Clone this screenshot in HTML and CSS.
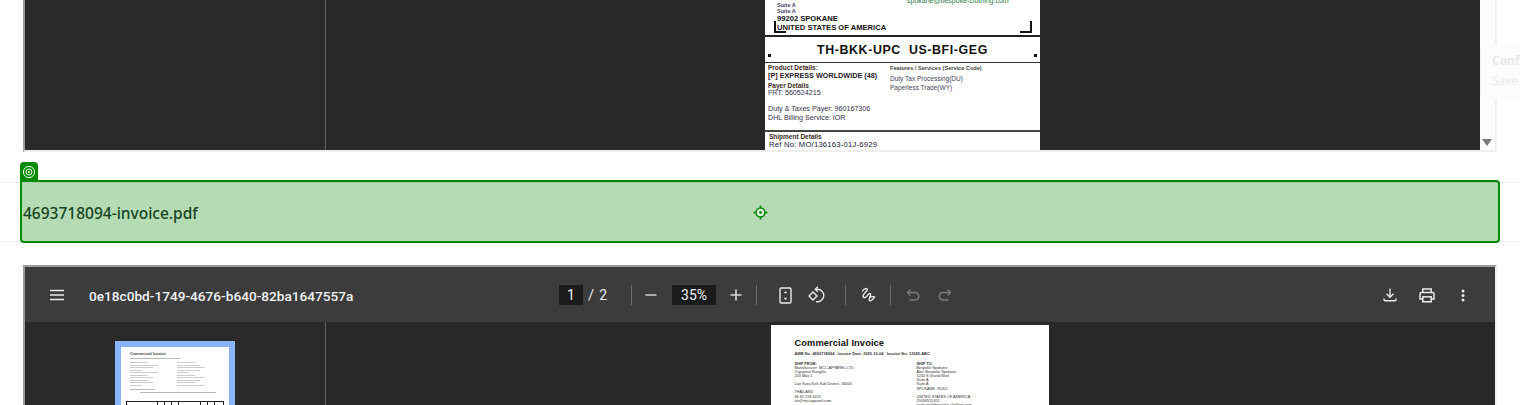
FILE: index.html
```html
<!DOCTYPE html>
<html lang="en">
<head>
    <meta charset="UTF-8">
    <title>Shipment documents</title>
    <link rel="stylesheet" href="styles.css">
</head>
<body>
    <div class="viewer viewer-top">
        <div class="side"></div>
        <div class="stage">
            <div class="label-page">
                <div class="addr">
                    <div class="addr-left">
                        <div class="tiny">Suite A</div>
                        <div class="tiny">Suite A</div>
                        <div class="addr-bold">99202 SPOKANE</div>
                        <div class="addr-bold addr-country">UNITED STATES OF AMERICA</div>
                    </div>
                    <div class="addr-right">spokane@bespoke-clothing.com</div>
                    <span class="corner corner-left"></span>
                    <span class="corner corner-right"></span>
                </div>
                <div class="routing">
                    <span class="dot"></span>
                    <span class="routing-code">TH-BKK-UPC&nbsp; US-BFI-GEG</span>
                    <span class="dot"></span>
                </div>
                <div class="details">
                    <div class="details-left">
                        <div class="d-head">Product Details:</div>
                        <div class="d-product">[P] EXPRESS WORLDWIDE (48)</div>
                        <div class="d-head d-payer">Payer Details</div>
                        <div class="d-text">FRT: 560524215</div>
                        <div class="d-text d-duty">Duty &amp; Taxes Payer: 960167306</div>
                        <div class="d-text d-bill">DHL Billing Service: IOR</div>
                    </div>
                    <div class="details-right">
                        <div class="f-head">Features / Services (Service Code)</div>
                        <div class="f-text f-first">Duty Tax Processing(DU)</div>
                        <div class="f-text">Paperless Trade(WY)</div>
                    </div>
                </div>
                <div class="shipment">
                    <div class="d-head">Shipment Details</div>
                    <div class="s-ref">Ref No: MO/136163-01J-6929</div>
                </div>
            </div>
        </div>
        <div class="scrollbar"><span class="scroll-down"></span></div>
    </div>

    <div class="toast">
        <div class="toast-title">Confirm</div>
        <div class="toast-text">Save</div>
    </div>

    <div class="doc-row">
        <span class="doc-name">4693718094-invoice.pdf</span>
        <div class="selection">
            <div class="selection-tab">
                <svg width="14" height="14" viewBox="0 0 14 14" fill="none" stroke="#fff">
                    <circle cx="7" cy="7" r="5.6" stroke-width="1"/>
                    <circle cx="7" cy="7" r="3" stroke-width="1"/>
                    <circle cx="7" cy="7" r="1" fill="#fff" stroke="none"/>
                </svg>
            </div>
            <svg class="selection-aim" width="15" height="15" viewBox="0 0 15 15" fill="none" stroke="#0a8a0a">
                <circle cx="7.5" cy="7.5" r="4.5" stroke-width="1.6" fill="#dff0df"/>
                <circle cx="7.5" cy="7.5" r="1.4" fill="#0a8a0a" stroke="none"/>
                <path d="M7.5 0.5v2.5M7.5 12v2.5M0.5 7.5h2.5M12 7.5h2.5" stroke-width="1.6"/>
            </svg>
        </div>
    </div>

    <div class="viewer viewer-bottom">
        <div class="toolbar">
            <div class="tb-left">
                <svg class="ic" width="16" height="12" viewBox="0 0 16 12" stroke="#e8eaed" stroke-width="1.5">
                    <path d="M1 1.5h14M1 6h14M1 10.5h14"/>
                </svg>
                <span class="file-title">0e18c0bd-1749-4676-b640-82ba1647557a</span>
            </div>
            <div class="tb-center">
                <span class="num-box page-box">1</span>
                <span class="tb-slash">/</span>
                <span class="tb-total">2</span>
                <span class="sep sep-a"></span>
                <svg class="ic ic-minus" width="12" height="12" viewBox="0 0 12 12" stroke="#c4c7ca" stroke-width="1.6"><path d="M0.5 6h11"/></svg>
                <span class="num-box zoom-box">35%</span>
                <svg class="ic ic-plus" width="12" height="12" viewBox="0 0 12 12" stroke="#d5d7d9" stroke-width="1.6"><path d="M0.5 6h11M6 0.5v11"/></svg>
                <span class="sep sep-b"></span>
                <svg class="ic ic-fit" width="13" height="17" viewBox="0 0 13 17" fill="none" stroke="#e8eaed">
                    <rect x="1" y="1" width="11" height="15" rx="1.2" stroke-width="1.4"/>
                    <path d="M6.5 4l-1.8 2.2h3.6zM6.5 13l-1.8-2.2h3.6z" fill="#e8eaed" stroke="none"/>
                </svg>
                <svg class="ic ic-rotate" width="18" height="18" viewBox="0 0 18 18" fill="none" stroke="#e8eaed" stroke-width="1.4">
                    <path d="M7.8 3.3h1.7a6.2 6.2 0 1 1 -1.5 12.2"/>
                    <path d="M9.8 0.8L7.3 3.3l2.5 2.5"/>
                    <path d="M1 10L5 6l4 4-4 4z"/>
                </svg>
                <span class="sep sep-c"></span>
                <svg class="ic ic-draw" width="16" height="16" viewBox="0 0 16 16" fill="none" stroke="#e8eaed" stroke-width="1.4" stroke-linecap="round">
                    <path d="M2.5 4C4 1.5 7 0.8 7.3 2.5 7.6 4.5 2.5 6.5 3.2 9.5c.5 2.2 3.2 1 4.6-1.5C9 6 11 5.8 10.5 8.5c-.4 2.2-2.3 4.3-1 5.2 1.2.8 3.3-1.2 5-3.5"/>
                    <path d="M10 10c1.5-.6 3-.5 4.5 0"/>
                </svg>
                <span class="sep sep-d"></span>
                <svg class="ic ic-undo" width="14" height="14" viewBox="0 0 14 14" fill="none" stroke="#7c7e80" stroke-width="1.4">
                    <path d="M4.5 1.5L1.5 4.5l3 3"/>
                    <path d="M1.5 4.5h7.500a3.600 3.600 0 0 1 0 7.500H3.500"/>
                </svg>
                <svg class="ic ic-redo" width="14" height="14" viewBox="0 0 14 14" fill="none" stroke="#7c7e80" stroke-width="1.4">
                    <path d="M9.5 1.5l3 3-3 3"/>
                    <path d="M12.5 4.5H5a3.600 3.600 0 0 0 0 7.500h5.500"/>
                </svg>
            </div>
            <div class="tb-right">
                <svg class="ic ic-save" width="14" height="14" viewBox="0 0 14 14" fill="none" stroke="#e8eaed" stroke-width="1.4">
                    <path d="M7 0.5v8.5M3.5 5.8L7 9.300l3.500-3.500"/>
                    <path d="M1 10.5v1c0 .8.5 1.3 1.3 1.3h9.400c.8 0 1.300-.5 1.300-1.300v-1"/>
                </svg>
                <svg class="ic ic-print" width="16" height="15" viewBox="0 0 16 15" fill="none" stroke="#e8eaed" stroke-width="1.5">
                    <path d="M3.8 4.5V1h8.400v3.500"/>
                    <path d="M3.8 11H1V6c0-.9.6-1.5 1.5-1.5h11c.9 0 1.500.6 1.500 1.500v5h-2.800"/>
                    <rect x="3.8" y="8.8" width="8.4" height="5"/>
                </svg>
                <svg class="ic ic-more" width="4" height="13" viewBox="0 0 4 13" fill="#e8eaed">
                    <circle cx="2" cy="2" r="1.5"/><circle cx="2" cy="6.5" r="1.5"/><circle cx="2" cy="11" r="1.5"/>
                </svg>
            </div>
        </div>
        <div class="viewer-body">
            <div class="side side-thumbs">
                <div class="thumb">
                    <div class="thumb-title">Commercial Invoice</div>
                    <div class="thumb-line thumb-line-awb"></div>
                    <div class="thumb-cols">
                        <div class="thumb-col">
                            <i class="w-s"></i><i></i><i class="w-m"></i><i class="w-xs"></i><i class="gap"></i><i class="gap w-s"></i><i class="w-m"></i><i class="w-s"></i><i class="w-m"></i><i class="w-xs"></i>
                        </div>
                        <div class="thumb-col">
                            <i class="w-s"></i><i class="w-m"></i><i></i><i class="w-m"></i><i class="w-xs"></i><i class="w-s"></i><i class="gap"></i><i class="w-m"></i><i class="w-s"></i><i></i>
                        </div>
                    </div>
                    <div class="thumb-line thumb-line-short"></div>
                    <div class="thumb-line thumb-line-long"></div>
                    <div class="thumb-table">
                        <span class="cell-first"></span><span></span><span></span><span></span><span class="cell-wide"></span><span></span><span></span><span></span>
                    </div>
                </div>
            </div>
            <div class="stage stage-bottom">
                <div class="invoice-page">
                    <div class="inv-title">Commercial Invoice</div>
                    <div class="inv-meta">AWB No: 4693718094 &nbsp; Invoice Date: 2025-10-04 &nbsp; Invoice No: 12345-ABC</div>
                    <div class="inv-cols">
                        <div class="inv-col">
                            <div class="inv-head">SHIP FROM:</div>
                            <div>Manufacturer: MCC APPAREL LTD.</div>
                            <div>Yupaporn Rangkla</div>
                            <div>243 Moo 1</div>
                            <div class="inv-gap">Lao Suea Kok Sub-District, 34000</div>
                            <div class="inv-gap">THAILAND</div>
                            <div>66 82 193 6415</div>
                            <div>tos@mccapparel.com</div>
                        </div>
                        <div class="inv-col">
                            <div class="inv-head">SHIP TO:</div>
                            <div>Bespoke Spokane</div>
                            <div>Attn: Bespoke Spokane</div>
                            <div>1200 S Grand Blvd</div>
                            <div>Suite A</div>
                            <div>Suite A</div>
                            <div>SPOKANE, 99202</div>
                            <div class="inv-gap">UNITED STATES OF AMERICA</div>
                            <div>15096555451</div>
                            <div>spokane@bespoke-clothing.com</div>
                        </div>
                    </div>
                </div>
            </div>
        </div>
    </div>
</body>
</html>
```

FILE: styles.css
```css
html, body {
    margin: 0;
    height: 405px;
    overflow: hidden;
    background-color: white;
}
body {
    position: relative;
    font-family: "Liberation Sans", Arial, sans-serif;
}

/* pdf viewers */
.viewer {
    width: 1470px;
    margin-left: 23px;
    border-style: solid;
    border-width: 2px;
    border-color: #9b9b9b #eeeeee #eeeeee #9b9b9b;
    background-color: #282828;
}
.viewer-top {
    display: flex;
    height: 150px;
    border-top: 0;
}
.viewer-bottom {
    margin-top: 23px;
    height: 138px;
    border-bottom: 0;
}
.side {
    flex: none;
    width: 300px;
    background-color: #2a2a2b;
    border-right: 1px solid #5f5f5f;
}
.stage {
    flex: 1;
    display: flex;
    justify-content: center;
    align-items: flex-end;
    background-color: #282828;
    overflow: hidden;
}
.scrollbar {
    flex: none;
    width: 15px;
    position: relative;
    background-color: #fcfcfc;
}
.scroll-down {
    position: absolute;
    left: 2px;
    bottom: 4px;
    border-left: 5px solid transparent;
    border-right: 5px solid transparent;
    border-top: 7px solid #7b7b7b;
}

/* shipping label */
.label-page {
    flex: none;
    width: 275px;
    height: 150px;
    margin-left: -1px;
    display: flex;
    flex-direction: column;
    justify-content: flex-end;
    overflow: hidden;
    background-color: white;
    color: #1a1a2a;
}
.addr {
    flex: none;
    position: relative;
    height: 40px;
    display: flex;
    border-bottom: 2px solid #222;
    box-sizing: border-box;
}
.addr-left {
    width: 130px;
    padding: 5px 0 0 12px;
}
.addr-right {
    font-size: 7px;
    color: #2a7a4a;
    line-height: 8px;
}
.tiny {
    font-size: 5.5px;
    font-weight: bold;
    line-height: 6px;
    color: #444466;
}
.addr-bold {
    font-size: 7.6px;
    font-weight: bold;
    line-height: 9px;
    white-space: nowrap;
    color: #111;
}
.corner {
    position: absolute;
    bottom: 2px;
    width: 10px;
    height: 10px;
    border-bottom: 2px solid #111;
}
.corner-left {
    left: 9px;
    border-left: 2px solid #111;
}
.corner-right {
    right: 8px;
    border-right: 2px solid #111;
}
.routing {
    flex: none;
    height: 26px;
    display: flex;
    align-items: center;
    justify-content: space-between;
    padding: 0 3px;
    box-sizing: border-box;
    border-bottom: 1px solid #333;
}
.routing-code {
    font-size: 12.4px;
    font-weight: bold;
    letter-spacing: 0.6px;
    color: #111;
    white-space: nowrap;
}
.dot {
    width: 3px;
    height: 3px;
    margin-top: 12px;
    background-color: #111;
}
.details {
    flex: none;
    height: 69px;
    display: flex;
    box-sizing: border-box;
    padding: 1px 3px 0;
    border-bottom: 2px solid #444;
}
.details-left {
    width: 122px;
}
.details-right {
    padding-top: 1px;
}
.d-head {
    font-size: 6.5px;
    font-weight: bold;
    line-height: 7px;
    color: #3a2a1a;
}
.d-product {
    margin-top: 1px;
    font-size: 7.25px;
    font-weight: bold;
    line-height: 8px;
    white-space: nowrap;
    color: #2a1a2a;
}
.d-payer {
    margin-top: 2px;
}
.d-text {
    font-size: 7.15px;
    line-height: 8px;
    white-space: nowrap;
    color: #33334a;
}
.d-duty {
    margin-top: 8px;
}
.d-bill {
    margin-top: 1px;
}
.f-head {
    font-size: 5.6px;
    font-weight: bold;
    line-height: 7px;
    white-space: nowrap;
    color: #444;
}
.f-text {
    font-size: 6.5px;
    line-height: 9px;
    white-space: nowrap;
    color: #44445a;
}
.f-first {
    margin-top: 2px;
}
.shipment {
    flex: none;
    height: 18px;
    padding: 1px 0 0 4px;
    box-sizing: border-box;
}
.s-ref {
    font-size: 7.7px;
    line-height: 9px;
    letter-spacing: 0.2px;
    color: #22223a;
}

/* faded notification at the right edge */
.toast {
    position: absolute;
    left: 1480px;
    top: 45px;
    width: 40px;
    height: 54px;
    box-sizing: border-box;
    padding: 6px 0 0 11px;
    overflow: hidden;
    white-space: nowrap;
    background-color: #fcfcfc;
    border-left: 1px solid #f3f3f3;
    font-family: "Open Sans", sans-serif;
    font-size: 12px;
    line-height: 20px;
    color: #e8e8e8;
}
.toast-title {
    font-weight: bold;
}

/* document row */
.doc-row {
    display: flex;
    align-items: center;
    position: relative;
    height: 56px;
    margin-top: 30px;
    padding-left: 23px;
    padding-top: 2px;
    border-top: 1px solid #efefef;
    border-bottom: 1px solid #efefef;
    font-family: "Noto Sans", sans-serif;
    font-size: 15.5px;
    font-weight: 500;
    color: #24292e;
}
.selection {
    position: absolute;
    left: 20px;
    top: -3px;
    width: 1480px;
    height: 63px;
    box-sizing: border-box;
    border: 2px solid #008a00;
    border-radius: 4px;
    border-top-left-radius: 0;
    background-color: rgba(0, 130, 0, 0.29);
}
.selection-tab {
    position: absolute;
    left: -2px;
    top: -20px;
    width: 18px;
    height: 19px;
    display: flex;
    align-items: center;
    justify-content: center;
    background-color: #008a00;
    border-radius: 4px 4px 0 0;
}
.selection-aim {
    position: absolute;
    left: 731px;
    top: 23px;
}

/* toolbar */
.toolbar {
    height: 54px;
    padding-top: 1px;
    display: flex;
    align-items: center;
    background-color: #3c3c3c;
    color: #e8eaed;
    font-family: "Roboto", sans-serif;
}
.ic {
    flex: none;
    display: block;
}
.tb-left {
    flex: none;
    width: 534px;
    display: flex;
    align-items: center;
    box-sizing: border-box;
    padding-left: 24px;
}
.file-title {
    margin-left: 24px;
    padding-top: 2px;
    font-size: 13.65px;
    font-weight: 500;
    white-space: nowrap;
    color: #f1f3f4;
}
.tb-center {
    flex: none;
    display: flex;
    align-items: center;
    font-size: 14px;
}
.num-box {
    display: flex;
    align-items: center;
    justify-content: center;
    height: 20px;
    background-color: #1b1b1b;
    color: #f1f3f4;
}
.page-box {
    width: 24px;
}
.zoom-box {
    width: 44px;
    margin-left: 15px;
}
.tb-slash {
    margin-left: 5px;
    font-size: 15px;
}
.tb-total {
    margin-left: 5px;
}
.sep {
    width: 1px;
    height: 20px;
    background-color: #6a6a6a;
}
.sep-a { margin-left: 24px; }
.ic-minus { margin-left: 13px; }
.ic-plus { margin-left: 14px; }
.sep-b { margin-left: 14px; }
.ic-fit { margin-left: 22px; }
.ic-rotate { margin-left: 16px; }
.sep-c { margin-left: 19px; }
.ic-draw { margin-left: 14px; }
.sep-d { margin-left: 14px; }
.ic-undo { margin-left: 15px; }
.ic-redo { margin-left: 18px; }
.tb-right {
    flex: 1;
    display: flex;
    align-items: center;
    justify-content: flex-end;
    padding-right: 30px;
}
.ic-print { margin-left: 22px; }
.ic-more { margin-left: 26px; }

/* lower viewer body */
.viewer-body {
    display: flex;
    height: 83px;
    overflow: hidden;
}
.side-thumbs {
    display: flex;
    justify-content: center;
    padding-top: 19px;
}
.thumb {
    width: 120px;
    height: 110px;
    padding: 4px 5px 0 9px;
    box-sizing: border-box;
    background-color: white;
    border: 6px solid #8ab4f8;
    flex: none;
}
.thumb-title {
    font-size: 3.8px;
    font-weight: bold;
    line-height: 6px;
    color: #444;
    white-space: nowrap;
}
.thumb-line {
    height: 1px;
    background-color: #b8b8b8;
}
.thumb-line-awb {
    width: 50px;
    margin-top: 1px;
}
.thumb-line-short {
    width: 25px;
    margin-top: 2px;
}
.thumb-line-long {
    width: 76px;
    margin: 2px 0 0 10px;
}
.thumb-cols {
    display: flex;
    gap: 11px;
    margin-top: 3px;
}
.thumb-col {
    flex: none;
    width: 36px;
}
.thumb-col i {
    display: block;
    width: 28px;
    height: 1px;
    margin-bottom: 1.5px;
    background-color: #cccccc;
}
.thumb-col .w-xs { width: 12px; }
.thumb-col .w-s { width: 18px; }
.thumb-col .w-m { width: 23px; }
.thumb-col .gap {
    margin-top: 1.5px;
}
.thumb-table {
    display: flex;
    width: 98px;
    height: 10px;
    box-sizing: border-box;
    margin: 8px 0 0 -4px;
    border: 1px solid #222;
}
.thumb-table span {
    width: 7px;
    border-left: 1px solid #222;
    box-sizing: border-box;
}
.thumb-table .cell-first {
    width: 30px;
    border-left: 0;
}
.thumb-table .cell-wide {
    width: 22px;
}
.stage-bottom {
    align-items: flex-start;
    padding-top: 3px;
}
.invoice-page {
    flex: none;
    width: 278px;
    height: 80px;
    margin-left: -2px;
    box-sizing: border-box;
    padding: 13px 0 0 24px;
    overflow: hidden;
    background-color: white;
    color: #333;
}
.inv-title {
    font-size: 9.3px;
    font-weight: bold;
    line-height: 11px;
    letter-spacing: 0.1px;
    color: #111;
}
.inv-meta {
    margin-top: 2px;
    font-size: 3.95px;
    font-weight: bold;
    line-height: 5px;
    white-space: nowrap;
    color: #333;
}
.inv-cols {
    display: flex;
    margin-top: 6px;
    font-size: 3.8px;
    line-height: 4.1px;
    white-space: nowrap;
}
.inv-col {
    flex: none;
    width: 122px;
}
.inv-head {
    font-weight: bold;
}
.inv-gap {
    margin-top: 4px;
}
```
